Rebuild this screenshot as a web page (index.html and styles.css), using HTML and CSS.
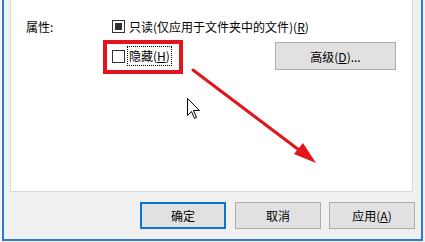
FILE: index.html
```html
<!DOCTYPE html>
<html>
<head>
<meta charset="utf-8">
<link rel="stylesheet" href="styles.css">
</head>
<body>
<div class="window">
  <div class="panel">
    <div class="attrs">
      <div class="label">属性:</div>
      <div class="opts">
        <div class="row row1">
          <span class="cb cb-ind"></span>
          <span class="txt">只读(仅应用于文件夹中的文件)(<u>R</u>)</span>
        </div>
        <div class="row row2">
          <div class="hidden-opt">
            <span class="cb"></span>
            <span class="txt focus">隐藏(<u>H</u>)</span>
          </div>
          <button class="btn adv">高级(<u>D</u>)...</button>
        </div>
      </div>
    </div>
  </div>
  <div class="buttons">
    <button class="btn def">确定</button>
    <button class="btn cancel">取消</button>
    <button class="btn apply">应用(<u>A</u>)</button>
  </div>
  <div class="redbox"></div>
  <svg class="overlay" width="425" height="242" viewBox="0 0 425 242">
    <line x1="193" y1="70" x2="303" y2="153" stroke="#e3141c" stroke-width="3" stroke-linecap="round"/>
    <polygon points="316,163 294,154 303,143" fill="#e3141c"/>
    <path d="M187.5 98.5 L187.5 115.5 L191.5 111.5 L194.5 118.5 L196.5 117.5 L193.5 110.5 L199.5 110.5 Z" fill="#fff" stroke="#000" stroke-width="1" stroke-linejoin="miter"/>
  </svg>
</div>
</body>
</html>
```
FILE: styles.css
```css
html, body {
  margin: 0;
  padding: 0;
}
body {
  background: #f4f4f4;
  padding-left: 2px;
  width: 425px;
  height: 242px;
  box-sizing: border-box;
  overflow: hidden;
  font-family: "Noto Sans CJK SC", "Microsoft YaHei", sans-serif;
  font-size: 12px;
  color: #000;
}
.window {
  position: relative;
  box-sizing: border-box;
  width: 421px;
  height: 241px;
  background: #f0f0f0;
  border-left: 2px solid #2f7ad0;
  border-right: 2px solid #2f7ad0;
  border-bottom: 2px solid #2f7ad0;
  display: flex;
  flex-direction: column;
}
.panel {
  box-sizing: border-box;
  margin-left: 6px;
  width: 403px;
  height: 192px;
  background: #fff;
  border: 1px solid #d9d9d9;
  border-top: 0;
  padding: 20px 16px 0 15px;
}
.attrs {
  display: grid;
  grid-template-columns: 86px 1fr;
}
.label {
  line-height: 13px;
  padding-left: 0;
}
.opts {
  display: flex;
  flex-direction: column;
}
.row {
  display: flex;
  align-items: center;
}
.row1 {
  height: 13px;
}
.row2 {
  margin-top: 9px;
  height: 28px;
  justify-content: space-between;
}
.hidden-opt {
  display: flex;
  align-items: center;
}
.cb {
  box-sizing: border-box;
  width: 13px;
  height: 13px;
  border: 1px solid #333;
  background: #fff;
  display: flex;
  align-items: center;
  justify-content: center;
  margin-right: 2px;
}
.cb-ind::after {
  content: "";
  width: 7px;
  height: 7px;
  background: #333;
}
.txt {
  line-height: 16px;
  padding: 1px 1px;
  border: 1px solid transparent;
  white-space: nowrap;
}
.focus {
  border: 1px dotted #000;
}
u {
  text-decoration: underline;
  text-underline-offset: 1px;
}
.btn {
  box-sizing: border-box;
  font-family: inherit;
  font-size: 12px;
  color: #000;
  background: #e1e1e1;
  border: 1px solid #adadad;
  padding: 0;
  margin: 0;
  display: flex;
  align-items: center;
  justify-content: center;
}
.adv {
  width: 121px;
  height: 28px;
}
.buttons {
  display: flex;
  padding: 10px 6px 0 0;
  justify-content: flex-end;
}
.buttons .btn {
  width: 86px;
  height: 27px;
}
.def {
  border: 2px solid #0a74d4;
}
.cancel {
  margin-left: 9px;
}
.apply {
  margin-left: 8px;
}
.redbox {
  position: absolute;
  left: 99px;
  top: 40px;
  width: 80px;
  height: 34px;
  box-sizing: border-box;
  border: 4px solid #e3141c;
}
.overlay {
  position: absolute;
  left: -4px;
  top: 0;
  pointer-events: none;
}
```
